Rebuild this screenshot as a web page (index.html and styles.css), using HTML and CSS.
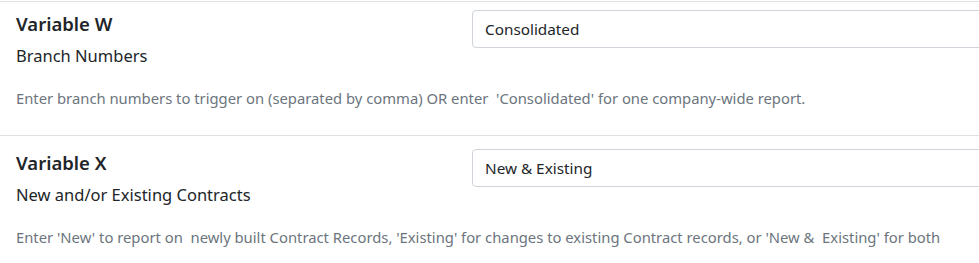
FILE: index.html
```html
<!DOCTYPE html>
<html lang="en">
<head>
<meta charset="utf-8">
<title>Variables</title>
<link rel="stylesheet" href="styles.css">
</head>
<body>
<div class="list">
  <div class="item">
    <div class="row">
      <div class="label">
        <div class="title">Variable W</div>
        <div class="subtitle">Branch Numbers</div>
      </div>
      <div class="field">
        <input class="input" type="text" value="Consolidated">
      </div>
    </div>
    <div class="help">Enter branch numbers to trigger on (separated by comma) OR enter&nbsp; 'Consolidated' for one company-wide report.</div>
  </div>
  <div class="item">
    <div class="row">
      <div class="label">
        <div class="title">Variable X</div>
        <div class="subtitle">New and/or Existing Contracts</div>
      </div>
      <div class="field">
        <input class="input" type="text" value="New &amp; Existing">
      </div>
    </div>
    <div class="help">Enter 'New' to report on&nbsp; newly built Contract Records, 'Existing' for changes to existing Contract records, or 'New &amp;&nbsp; Existing' for both</div>
  </div>
</div>
</body>
</html>
```
FILE: styles.css
```css
html, body {
  margin: 0;
  padding: 0;
  background: #ffffff;
  font-family: "Noto Sans", "Open Sans", sans-serif;
  color: #212529;
  overflow: hidden;
}

.list {
  padding-top: 1px;
}

.item {
  border-top: 1px solid #dee2e6;
  padding: 13px 0 26px 16px;
}

.item:first-child {
  padding-top: 8px;
}

.row {
  display: grid;
  grid-template-columns: 456px 520px;
}

.title {
  font-size: 18.5px;
  font-weight: 600;
  line-height: 24px;
  padding-top: 2px;
}

.subtitle {
  font-size: 16.5px;
  line-height: 24px;
  margin-top: 8px;
}

.field {
  display: flex;
}

.input {
  box-sizing: border-box;
  width: 520px;
  height: 38px;
  padding: 6px 12px;
  border: 1px solid #ced4da;
  border-radius: 4px;
  font-family: inherit;
  font-size: 15.3px;
  color: #212529;
  background: #fff;
  outline: none;
}

.help {
  margin-top: 20px;
  font-size: 14.8px;
  line-height: 21px;
  color: #6c757d;
}
```
